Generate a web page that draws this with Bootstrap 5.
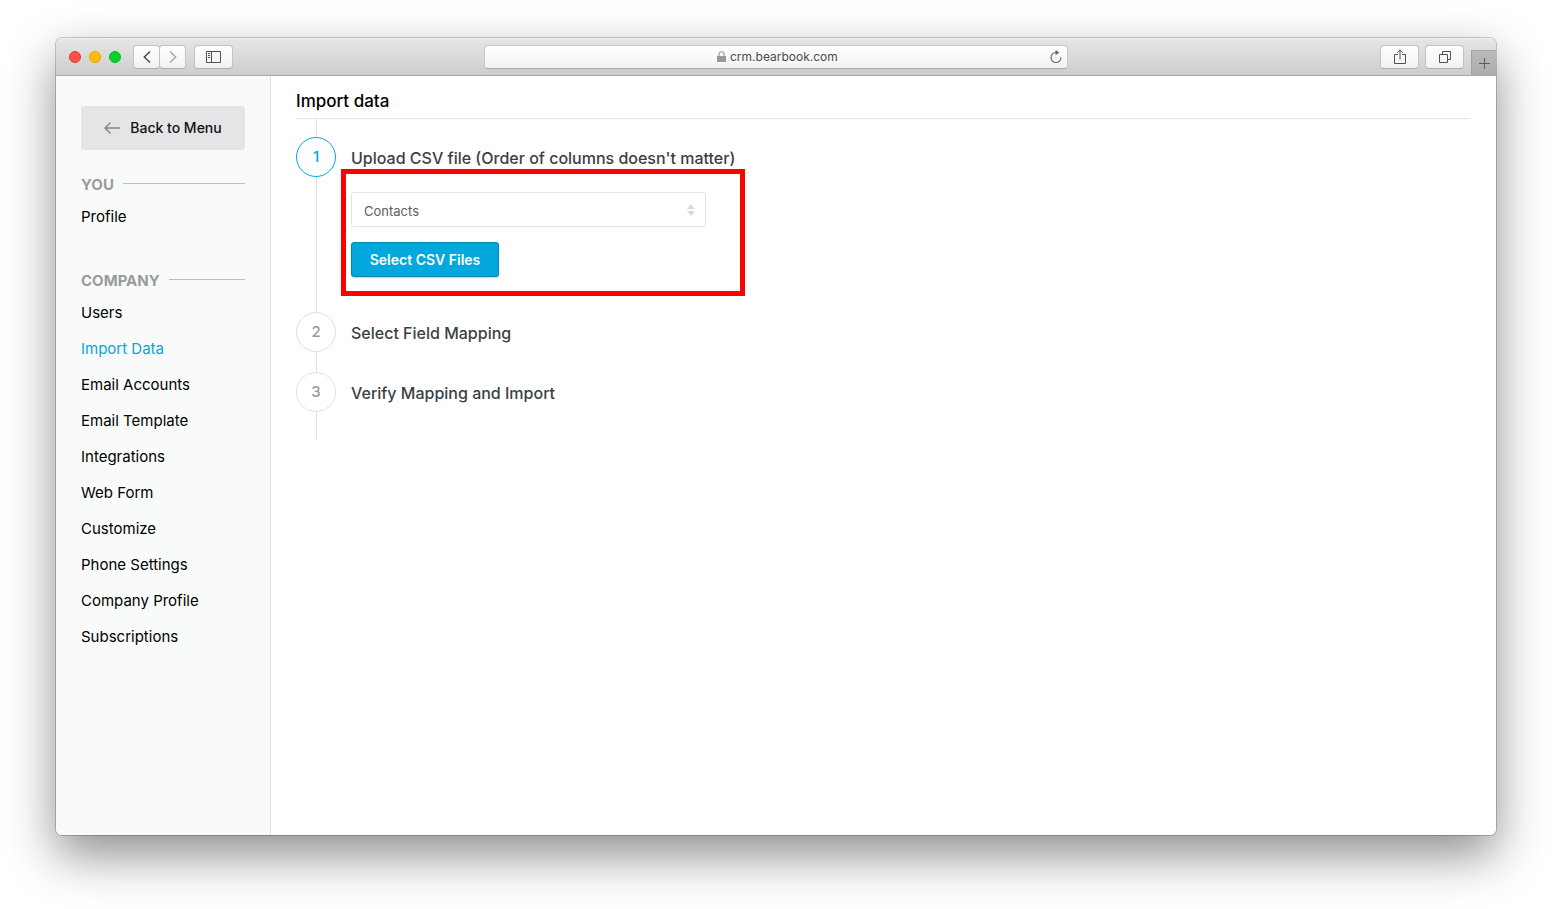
<!DOCTYPE html>
<html lang="en">
<head>
<meta charset="utf-8">
<meta name="viewport" content="width=device-width, initial-scale=1">
<title>Import data</title>
<link href="https://cdn.jsdelivr.net/npm/bootstrap@5.3.0/dist/css/bootstrap.min.css" rel="stylesheet">
<style>
  body { font-family: Inter, "Liberation Sans", sans-serif; font-size: 15px; line-height: 20px; color: #000; background: #fff; padding: 38px 56px 74px; }
  .browser { border-radius: 6px; overflow: hidden; box-shadow: 0 0 0 1px rgba(0,0,0,.2), 0 20px 50px rgba(0,0,0,.45); }
  /* toolbar */
  .toolbar { display: grid; grid-template-columns: 1fr minmax(200px, 584px) 1fr; height: 38px; background: linear-gradient(#e6e6e6, #cdcdcd); border-bottom: 1px solid #a6a6a6; box-shadow: inset 0 1px #f4f4f4; }
  .toolbar-start { padding-left: 13px; }
  .light { width: 12px; height: 12px; border-radius: 50%; border: 1px solid; }
  .light-red { background: #ff4f49; border-color: #e8332e; }
  .light-amber { background: #ffbd05; border-color: #e3a000; }
  .light-green { background: #06d22e; border-color: #0bb426; }
  .tool { height: 24px; width: 39px; padding: 0; border: 1px solid #c3c3c3; border-bottom-color: #adadad; border-radius: 4px; background: linear-gradient(#fefefe, #f2f2f2); display: flex; align-items: center; justify-content: center; }
  .tool-nav { width: 27px; }
  .tool-nav:last-child { margin-left: -1px; }
  .tool-pair { gap: 6px; margin-right: 7px; }
  .address { height: 24px; border: 1px solid #c6c6c6; border-bottom-color: #a9a9a9; border-radius: 4px; background: linear-gradient(#fff, #f2f2f2); padding: 0 5px 0 22px; }
  .address input { width: 110px; border: 0; padding: 1px 0 0; background: none; font-size: 12px; line-height: 20px; color: #4c4c4c; outline: 0; }
  .new-tab { width: 25px; height: 25px; padding: 0; border: 0; border-left: 1px solid #a2a2a2; border-top: 1px solid #a2a2a2; background: linear-gradient(#bababa, #adadad); display: flex; align-items: center; justify-content: center; }
  /* sidebar */
  .sidebar { width: 215px; background: #f9fbfa; border-right: 1px solid #dfe1e2; padding: 30px 25px; }
  .back { height: 44px; background: #e4e5e7; border: 0; border-radius: 3px; font-size: 14px; font-weight: 500; color: #111; gap: 10px; }
  .side-nav { margin-top: 25px; }
  .group-title { font-size: 15px; font-weight: 700; line-height: 20px; color: #999b9d; gap: 9px; margin: 0; }
  .group-title::after { content: ""; flex: 1; height: 1px; margin-bottom: 3px; background: #bcbebf; }
  .side-link { display: block; padding: 8px 0; color: #000; text-decoration: none; }
  .side-link.active { color: #02a7dd; }
  .group-gap { margin-top: 36px; }
  /* import steps */
  .main-pane { padding: 15px 26px 15px 25px; }
  .page-title { font-size: 17px; font-weight: 500; line-height: 20px; padding-bottom: 7px; margin: 0; border-bottom: 1px solid #e3e4e5; }
  .steps { list-style: none; margin: 0; padding: 18px 0 28px; background: linear-gradient(#dfe0e1, #dfe0e1) 20px 0 / 1px 100% no-repeat; display: grid; gap: 20px; }
  .step { display: flex; gap: 15px; align-items: flex-start; }
  .step-no { width: 40px; height: 40px; flex: none; border: 1px solid #dfe0e1; border-radius: 50%; background: #fff; color: #999b9d; font-size: 15px; font-weight: 500; display: flex; align-items: center; justify-content: center; }
  .step.current .step-no { border-color: #02a7dd; color: #02a7dd; }
  .step-title { font-size: 16px; font-weight: 500; line-height: 20px; color: #3a3f45; margin: 0; padding-top: 11px; }
  .highlight { width: 404px; margin: 1px 0 -4px -10px; border: 5px solid #f00; padding: 18px 34px 14px 5px; display: grid; gap: 15px; justify-items: start; }
  .type-select { height: 35px; border: 1px solid #e2e3e5; border-radius: 3px; font-size: 13px; line-height: 20px; color: #5d6063; padding: 2px 30px 0 12px; background: #fff url("data:image/svg+xml,%3Csvg xmlns='http://www.w3.org/2000/svg' width='8' height='12' viewBox='0 0 8 12'%3E%3Cpath fill='%23d8d9da' d='M0 5l4-5 4 5zM0 7h8l-4 5z'/%3E%3C/svg%3E") no-repeat right 10px center / 8px 12px; }
  .csv-btn { height: 35px; width: 148px; padding: 0; background: #02a7dd; border: 1px solid #0688b3; border-radius: 3px; color: #fff; font-size: 14px; font-weight: 600; box-shadow: 0 1px 2px rgba(0,0,0,.2); }
  .csv-btn:hover { background: #0595c5; color: #fff; }
</style>
</head>
<body class="d-flex flex-column min-vh-100">
<div class="browser d-flex flex-column flex-grow-1">
  <header class="toolbar">
    <div class="toolbar-start d-flex align-items-center">
      <div class="d-flex gap-2">
        <span class="light light-red"></span>
        <span class="light light-amber"></span>
        <span class="light light-green"></span>
      </div>
      <div class="d-flex ms-2 ps-1">
        <button class="tool tool-nav" type="button" aria-label="Back"><svg width="8" height="12" fill="none" stroke="#4a4a4a" stroke-width="1.5"><path d="M7 .5 1.300 6 7 11.500"/></svg></button>
        <button class="tool tool-nav" type="button" aria-label="Forward"><svg width="8" height="12" fill="none" stroke="#a9a9a9" stroke-width="1.500"><path d="M1 .5 6.700 6 1 11.500"/></svg></button>
      </div>
      <button class="tool ms-2" type="button" aria-label="Show sidebar"><svg width="15" height="12" fill="none" stroke="#505050"><path d="M.5.5h14v11H.5zM5.500.5v11M2 2.500h2M2 4.500h2M2 6.500h2"/></svg></button>
    </div>
    <div class="address d-flex align-items-center align-self-center">
      <div class="d-flex align-items-center justify-content-center flex-grow-1 gap-1">
        <svg width="9" height="11" fill="#999"><path d="M0 5h9v6H0z"/><path d="M2 5V3.200a2.500 2.500 0 0 1 5 0V5" fill="none" stroke="#999" stroke-width="1.100"/></svg>
        <input type="text" value="crm.bearbook.com" aria-label="Address">
      </div>
      <button class="border-0 p-0 bg-transparent d-flex" type="button" aria-label="Reload"><svg width="12" height="14" fill="none" stroke="#666" stroke-width="1.100"><path d="M6 2.500A5 5 0 1 0 11 7.500"/><path d="M5.500 0v5.200L9.300 2.600z" fill="#666" stroke="none"/></svg></button>
    </div>
    <div class="d-flex align-items-center justify-content-end">
      <div class="tool-pair d-flex">
        <button class="tool" type="button" aria-label="Share"><svg width="12" height="16" fill="none" stroke="#505050"><path d="M4 5.500H.5v9h11v-9H8M6 10.500V1M3.200 3.700 6 .9l2.800 2.800"/></svg></button>
        <button class="tool" type="button" aria-label="Show tabs"><svg width="12" height="12" fill="none" stroke="#505050"><path d="M.5 3.500h8v8h-8zM3.500 3.500v-3h8v8h-3"/></svg></button>
      </div>
      <button class="new-tab align-self-end" type="button" aria-label="New tab"><svg width="11" height="11" stroke="#5c5c5c"><path d="M5.500 0v11M0 5.500h11"/></svg></button>
    </div>
  </header>
  <div class="d-flex flex-grow-1 bg-white">
    <aside class="sidebar flex-shrink-0">
      <button class="back w-100 d-flex align-items-center justify-content-center" type="button"><svg width="16" height="12" fill="none" stroke="#85878a" stroke-width="1.500"><path d="M6.500.5 1 6l5.500 5.500M1 6h15"/></svg>Back to Menu</button>
      <nav class="side-nav" aria-label="Settings">
        <h2 class="group-title d-flex align-items-center">YOU</h2>
        <div class="pt-1"><a class="side-link" href="#">Profile</a></div>
        <h2 class="group-title group-gap d-flex align-items-center">COMPANY</h2>
        <div class="pt-1">
          <a class="side-link" href="#">Users</a>
          <a class="side-link active" href="#" aria-current="page">Import Data</a>
          <a class="side-link" href="#">Email Accounts</a>
          <a class="side-link" href="#">Email Template</a>
          <a class="side-link" href="#">Integrations</a>
          <a class="side-link" href="#">Web Form</a>
          <a class="side-link" href="#">Customize</a>
          <a class="side-link" href="#">Phone Settings</a>
          <a class="side-link" href="#">Company Profile</a>
          <a class="side-link" href="#">Subscriptions</a>
        </div>
      </nav>
    </aside>
    <main class="main-pane flex-grow-1">
      <h1 class="page-title">Import data</h1>
      <ol class="steps">
        <li class="step current">
          <span class="step-no">1</span>
          <div>
            <h2 class="step-title">Upload CSV file (Order of columns doesn't matter)</h2>
            <div class="highlight">
              <select class="form-select type-select" aria-label="Record type"><option>Contacts</option><option>Companies</option></select>
              <button class="btn csv-btn" type="button">Select CSV Files</button>
            </div>
          </div>
        </li>
        <li class="step"><span class="step-no">2</span><h2 class="step-title">Select Field Mapping</h2></li>
        <li class="step"><span class="step-no">3</span><h2 class="step-title">Verify Mapping and Import</h2></li>
      </ol>
    </main>
  </div>
</div>
<script src="https://cdn.jsdelivr.net/npm/bootstrap@5.3.0/dist/js/bootstrap.bundle.min.js"></script>
</body>
</html>
